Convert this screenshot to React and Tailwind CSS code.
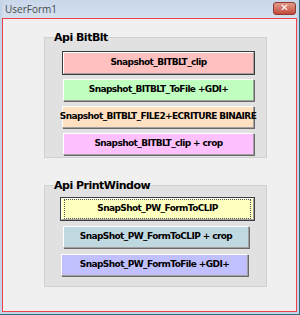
import React from "react";

const btn =
  "flex items-center justify-center h-[22px] text-[9px] tracking-[-0.6px] font-bold text-black whitespace-nowrap border border-t-white border-l-white border-r-[#a0a0a0] border-b-[#a0a0a0] shadow-[1px_1px_0_#696969]";

const Button = ({ label, color, width = "w-[191px]", ml = "ml-[18px]", isDefault, focus }) => (
  <div
    className={`${btn} ${color} ${width} ${ml} ${
      isDefault ? "outline outline-1 outline-[#3c3c3c]" : ""
    }`}
  >
    <div
      className={`w-full h-full flex items-center justify-center ${
        focus ? "border border-dotted border-[#555] m-[2px]" : ""
      }`}
    >
      {label}
    </div>
  </div>
);

export default function App() {
  return (
    <div
      className="w-[300px] h-[315px] bg-[#c3d4e8] flex flex-col px-[2px] pb-[2px] border-r border-b border-[#2f6b7c]"
      style={{ fontFamily: "'DejaVu Sans', sans-serif" }}
    >
      {/* Title bar */}
      <div className="h-[18px] flex items-center bg-gradient-to-b from-[#c9d7ea] to-[#d4e0ef]">
        <span
          className="ml-[3px] text-[10px] text-[#4a4a4a]"
          style={{ fontFamily: "'Open Sans', sans-serif" }}
        >
          UserForm1
        </span>
        <div className="ml-auto mr-[1px] mt-[-2px] w-[23px] h-[13px] rounded-[3px] bg-gradient-to-b from-[#e29a8c] to-[#c24a3a] border border-[#8e3a2e] flex items-center justify-center text-white text-[10px] font-bold leading-none">
          ✕
        </div>
      </div>

      {/* Form body */}
      <div className="flex-1 border border-[#f04048] bg-[#f0f0f0] flex flex-col">
        <fieldset className="ml-[41px] mt-[13px] w-[223px] h-[126px] border border-[#d0d0d0] bg-[#e1e1e1] flex flex-col">
          <legend className="ml-[8px] px-[1px] text-[11px] tracking-[-0.5px] font-bold leading-none">
            Api BitBlt
          </legend>
          <div className="flex flex-col gap-[5px] mt-[9px]">
            <Button label="Snapshot_BITBLT_clip" color="bg-[#ffc0c0]" isDefault />
            <Button label="Snapshot_BITBLT_ToFile +GDI+" color="bg-[#c0ffc0]" />
            <Button
              label="Snapshot_BITBLT_FILE2+ECRITURE BINAIRE"
              color="bg-[#ffe0c0]"
              width="w-[192px]"
              ml="ml-[17px]"
            />
            <Button label="Snapshot_BITBLT_clip + crop" color="bg-[#ffc0ff]" />
          </div>
        </fieldset>

        <fieldset className="ml-[41px] mt-[22px] w-[223px] h-[107px] border border-[#d0d0d0] bg-[#e1e1e1] flex flex-col">
          <legend className="ml-[8px] px-[1px] text-[11px] tracking-[-0.5px] font-bold leading-none">
            Api PrintWindow
          </legend>
          <div className="flex flex-col gap-[6px] mt-[7px]">
            <Button
              label="SnapShot_PW_FormToCLIP"
              color="bg-[#ffffc0]"
              width="w-[193px]"
              ml="ml-[16px]"
              isDefault
              focus
            />
            <Button
              label="SnapShot_PW_FormToCLIP + crop"
              color="bg-[#c0d8e0]"
              width="w-[186px]"
            />
            <Button
              label="SnapShot_PW_FormToFile +GDI+"
              color="bg-[#c0c0ff]"
              width="w-[187px]"
              ml="ml-[16px]"
            />
          </div>
        </fieldset>
      </div>
    </div>
  );
}
